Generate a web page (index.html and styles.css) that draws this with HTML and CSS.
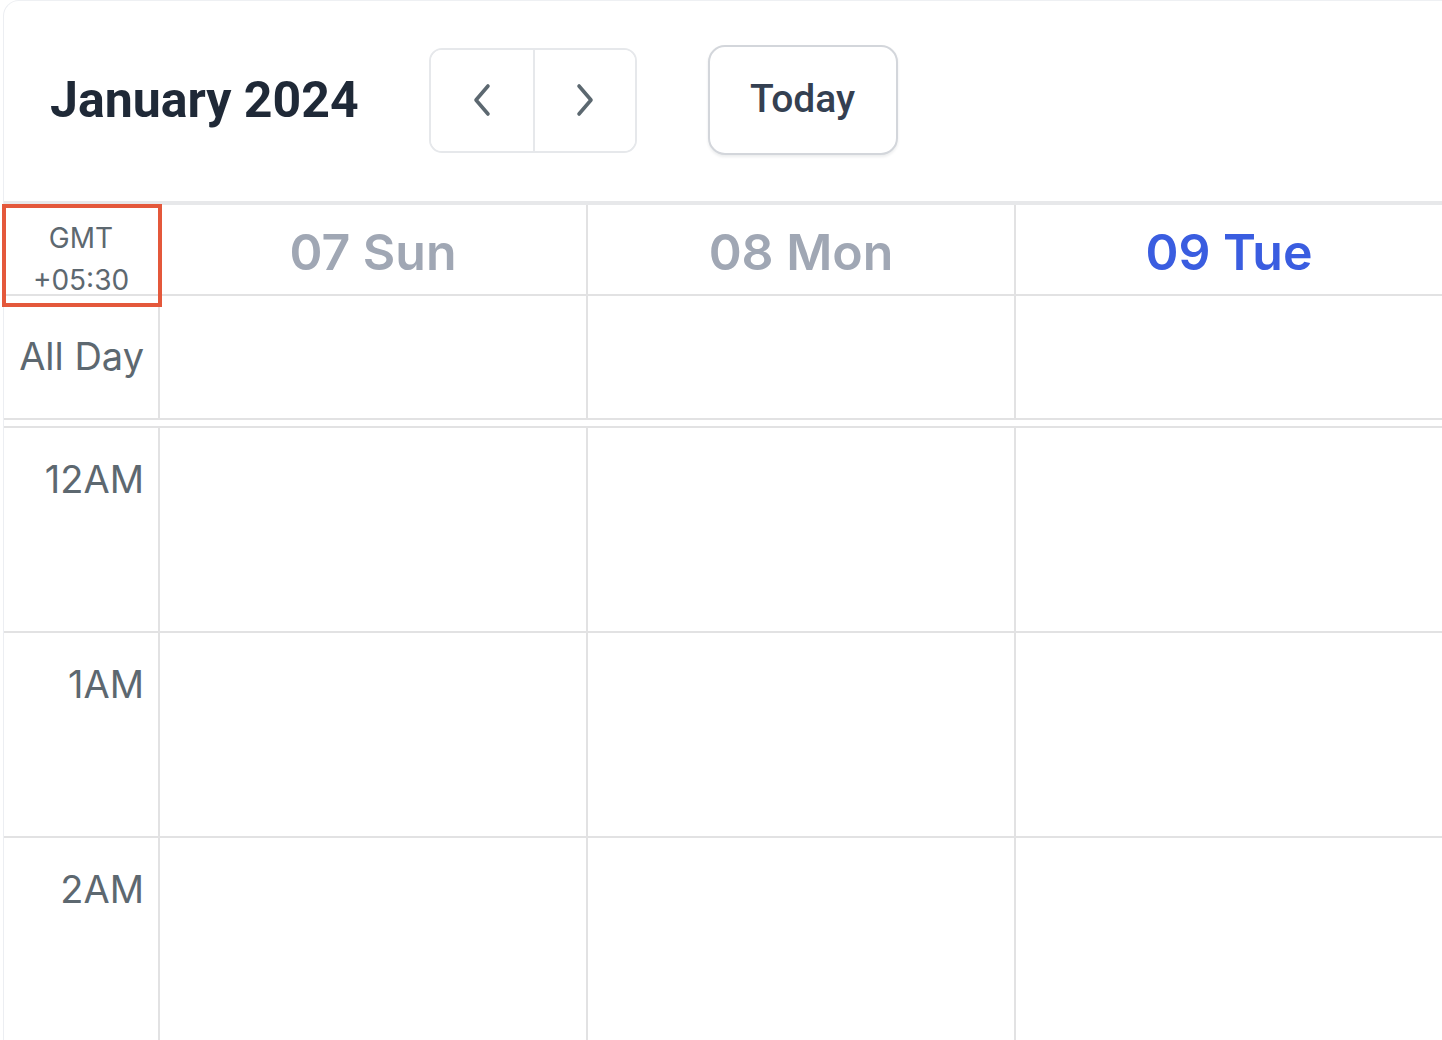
FILE: index.html
```html
<!DOCTYPE html>
<html lang="en">
<head>
<meta charset="utf-8">
<title>Calendar – January 2024</title>
<link rel="stylesheet" href="styles.css">
</head>
<body>
<div class="card">
  <header class="toolbar">
    <h1 class="title">January 2024</h1>
    <div class="nav-group">
      <button class="nav-btn" aria-label="Previous week">
        <svg width="22" height="34" viewBox="0 0 22 34" fill="none"><path d="M17 3 L5 17 L17 31" stroke="#5c6870" stroke-width="3.6" stroke-linecap="round" stroke-linejoin="round"/></svg>
      </button>
      <button class="nav-btn" aria-label="Next week">
        <svg width="22" height="34" viewBox="0 0 22 34" fill="none"><path d="M5 3 L17 17 L5 31" stroke="#5c6870" stroke-width="3.6" stroke-linecap="round" stroke-linejoin="round"/></svg>
      </button>
    </div>
    <button class="today-btn">Today</button>
  </header>

  <div class="calendar">
    <div class="row head-row">
      <div class="cell time-cell tz">
        <span>GMT</span>
        <span>+05:30</span>
      </div>
      <div class="cell day-head">07 Sun</div>
      <div class="cell day-head">08 Mon</div>
      <div class="cell day-head today">09 Tue</div>
    </div>
    <div class="row allday-row">
      <div class="cell time-cell allday-label">All Day</div>
      <div class="cell"></div>
      <div class="cell"></div>
      <div class="cell"></div>
    </div>
    <div class="hours">
      <div class="row hour-row">
        <div class="cell time-cell hour-label">12AM</div>
        <div class="cell"></div>
        <div class="cell"></div>
        <div class="cell"></div>
      </div>
      <div class="row hour-row">
        <div class="cell time-cell hour-label">1AM</div>
        <div class="cell"></div>
        <div class="cell"></div>
        <div class="cell"></div>
      </div>
      <div class="row hour-row">
        <div class="cell time-cell hour-label">2AM</div>
        <div class="cell"></div>
        <div class="cell"></div>
        <div class="cell"></div>
      </div>
    </div>
    <div class="tz-highlight"></div>
  </div>
</div>
</body>
</html>
```

FILE: styles.css
```css
* { box-sizing: border-box; }

html, body {
  margin: 0;
  padding: 0;
  background: #ffffff;
  overflow: hidden;
  height: 1040px;
}

body {
  font-family: "Inter", "Noto Sans", sans-serif;
}

.card {
  margin-left: 3px;
  width: 1460px;
  height: 1060px;
  border-left: 1px solid #eceef2;
  border-top: 1px solid #eef0f3;
  border-top-left-radius: 16px;
  background: #fff;
}

.toolbar {
  height: 204px;
  display: flex;
  align-items: center;
  padding-left: 46px;
  padding-bottom: 2px;
  border-bottom: 4px solid #e7e8ea;
}

.title {
  margin: 0;
  font-family: "Roboto", "Liberation Sans", sans-serif;
  font-weight: 700;
  font-size: 50px;
  color: #1f2937;
  letter-spacing: 0;
}

.nav-group {
  margin-left: 70px;
  display: flex;
  height: 105px;
  border: 2px solid #e6e8eb;
  border-radius: 13px;
  overflow: hidden;
}

.nav-btn {
  width: 102px;
  height: 100%;
  border: none;
  background: #fff;
  display: flex;
  align-items: center;
  justify-content: center;
  padding: 0;
}

.nav-btn + .nav-btn {
  border-left: 2px solid #e6e8eb;
}

.today-btn {
  margin-left: 71px;
  width: 190px;
  height: 110px;
  border: 2px solid #d3d6db;
  border-radius: 17px;
  background: #fff;
  box-shadow: 0 2px 3px rgba(15, 23, 42, 0.08);
  font-family: "Roboto", "Liberation Sans", sans-serif;
  font-weight: 500;
  font-size: 39px;
  color: #344051;
  padding: 0 0 2px 0;
}

.calendar {
  position: relative;
}

.row {
  display: grid;
  grid-template-columns: 156px repeat(3, 428px);
}

.cell {
  border-right: 2px solid #e2e2e3;
}

.head-row {
  height: 91px;
  border-bottom: 2px solid #e2e2e3;
}

.tz {
  display: flex;
  flex-direction: column;
  align-items: center;
  justify-content: center;
  font-size: 28px;
  line-height: 42px;
  color: #5d6870;
  padding-top: 12px;
}

.day-head {
  display: flex;
  align-items: center;
  justify-content: center;
  font-weight: 600;
  font-size: 50px;
  color: #a0a7b4;
  padding-bottom: 3px;
}

.day-head.today {
  color: #3a5de0;
}

.allday-row {
  height: 124px;
  border-bottom: 2px solid #e2e2e3;
}

.allday-label {
  display: flex;
  align-items: center;
  justify-content: flex-end;
  padding-right: 14px;
  padding-bottom: 2px;
  font-size: 38px;
  color: #5d6870;
}

.hours {
  margin-top: 6px;
  border-top: 2px solid #e2e2e3;
}

.hour-row {
  height: 205px;
  border-bottom: 2px solid #e2e2e3;
}

.hour-label {
  text-align: right;
  padding-right: 14px;
  padding-top: 28px;
  font-size: 38px;
  line-height: 46px;
  color: #5d6870;
}

.tz-highlight {
  position: absolute;
  left: -2px;
  top: -1px;
  width: 160px;
  height: 103px;
  border: 4px solid #e4583b;
  pointer-events: none;
}
```
